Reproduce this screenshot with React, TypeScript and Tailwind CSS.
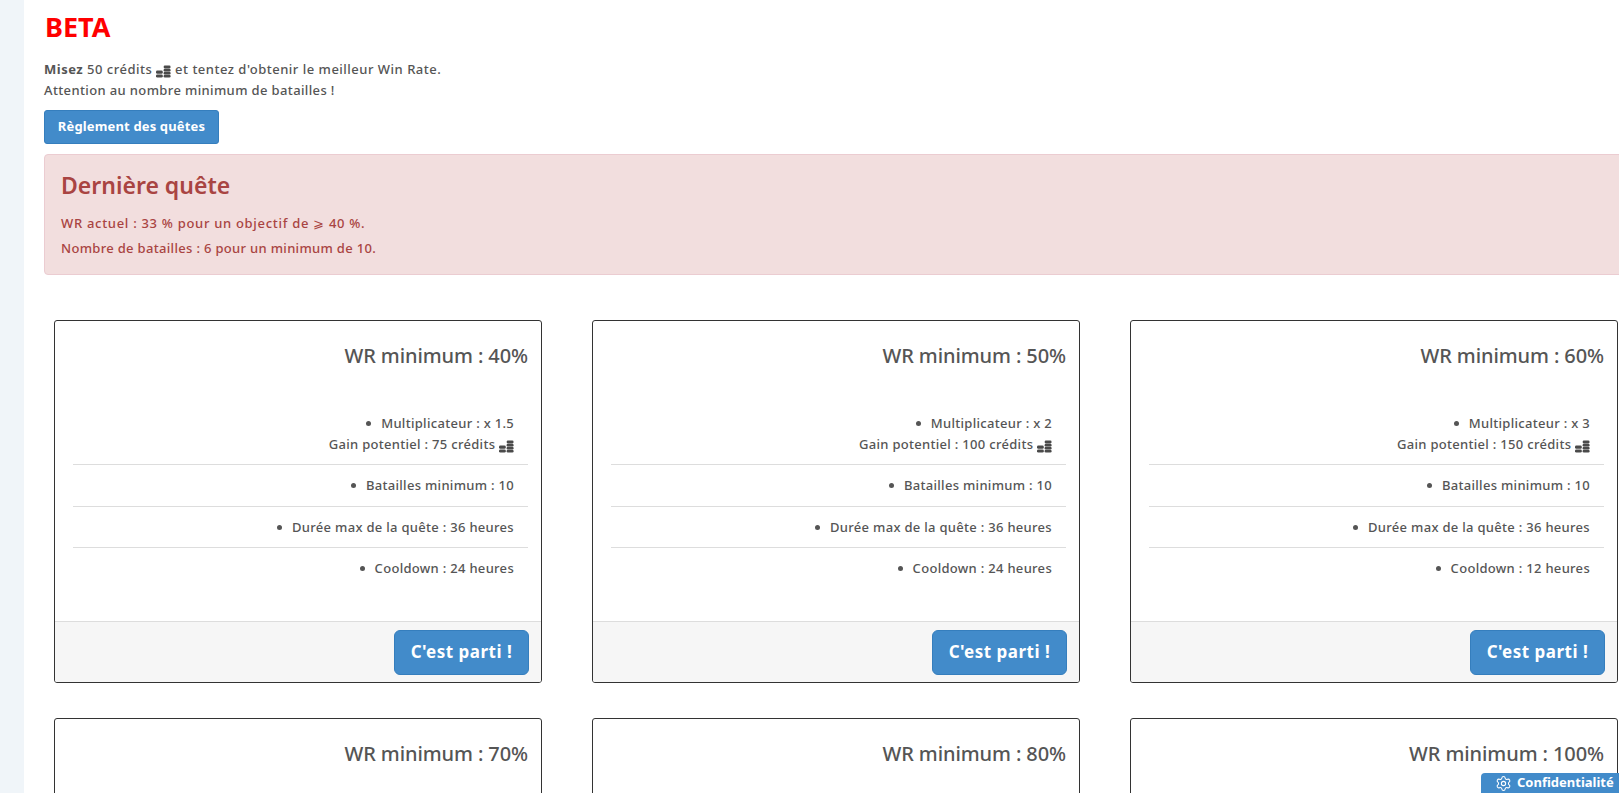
import React from 'react';
import { Settings } from 'lucide-react';

// small stack of coins shown next to the credits
const Coins = () => (
    <svg viewBox="0 0 15 13" className="inline-block w-[15px] h-[13px] align-[-4px]" aria-hidden="true">
        <g fill="#4a4a4a">
            <rect x="0" y="5.6" width="6.8" height="3.2" rx="1.4" />
            <rect x="0" y="9.4" width="6.8" height="3.2" rx="1.4" />
            <rect x="7.6" y="0.6" width="7" height="2.8" rx="1.3" />
            <rect x="7.6" y="3.8" width="7" height="2.8" rx="1.3" />
            <rect x="7.6" y="6.8" width="7" height="2.8" rx="1.3" />
            <rect x="7.6" y="9.8" width="7" height="2.8" rx="1.3" />
        </g>
    </svg>
);

const Bullet = () => <span className="inline-block w-[5px] h-[5px] rounded-full bg-[#555] mr-[10px] align-[2px]" />;

interface Quest {
    wr: number;
    multiplier: string;
    gain: number;
    cooldown: number;
}

const quests: Quest[] = [
    { wr: 40, multiplier: '1.5', gain: 75, cooldown: 24 },
    { wr: 50, multiplier: '2', gain: 100, cooldown: 24 },
    { wr: 60, multiplier: '3', gain: 150, cooldown: 12 },
    { wr: 70, multiplier: '4', gain: 200, cooldown: 12 },
    { wr: 80, multiplier: '5', gain: 250, cooldown: 12 },
    { wr: 100, multiplier: '10', gain: 500, cooldown: 12 },
];

const QuestCard: React.FC<{ quest: Quest }> = ({ quest }) => (
    <div className="h-[363px] flex flex-col border border-[#333] rounded-[3px] bg-white overflow-hidden">
        <div className="flex-1 pt-[23px] pl-[18px] pr-[13px]">
            <h3 className="text-[20px] leading-[24px] font-medium text-right tracking-[-0.1px]">WR minimum : {quest.wr}%</h3>
            <ul className="mt-[45px] text-right text-[13px] leading-[20px] tracking-[0.3px] font-medium">
                <li className="pr-[14px] pb-[9px] leading-[21px] border-b border-[#ddd]">
                    <Bullet />Multiplicateur : x {quest.multiplier}
                    <br />
                    Gain potentiel : {quest.gain} crédits <Coins />
                </li>
                <li className="pr-[14px] pt-[10px] pb-[11px] border-b border-[#ddd]"><Bullet />Batailles minimum : 10</li>
                <li className="pr-[14px] py-[10px] border-b border-[#ddd]"><Bullet />Durée max de la quête : 36 heures</li>
                <li className="pr-[14px] py-[10px]"><Bullet />Cooldown : {quest.cooldown} heures</li>
            </ul>
        </div>
        <div className="h-[61px] flex items-start justify-end bg-[#f6f6f6] border-t border-[#ddd] pt-[8px] pr-[12px]">
            <button className="w-[135px] h-[45px] pb-[2px] rounded-[6px] bg-[#428bca] border border-[#357ebd] text-white text-[17px] font-bold tracking-[0.5px]">
                C'est parti !
            </button>
        </div>
    </div>
);

export default function App() {
    return (
        <div className="h-[793px] overflow-hidden bg-[#f0f5f9] pl-[24px] text-[#555] font-['Noto_Sans',sans-serif]">
            <div className="h-full bg-white pl-[20px] pt-[8px] relative overflow-hidden">
                <h1 className="pl-[1px] text-[27px] leading-[38px] font-bold text-[#f00]">BETA</h1>
                <p className="mt-[13px] text-[13px] leading-[21px] font-medium">
                    <span className="tracking-[0.5px]"><b>Misez</b> 50 crédits <Coins /> et tentez d'obtenir le meilleur Win Rate.</span>
                    <br />
                    <span className="tracking-[0.37px]">Attention au nombre minimum de batailles !</span>
                </p>
                <button className="block mt-[9px] w-[175px] h-[34px] rounded-[3px] bg-[#428bca] border border-[#357ebd] text-white text-[13px] font-bold tracking-[0.15px]">
                    Règlement des quêtes
                </button>
                <div className="mt-[10px] w-[1600px] h-[121px] rounded-[4px] bg-[#f2dede] border border-[#ebccd1] text-[#a94442] pl-[16px] pt-[15px]">
                    <h2 className="text-[23px] leading-[30px] font-semibold">Dernière quête</h2>
                    <p className="mt-[11px] text-[13px] leading-[25px] font-medium">
                        <span className="tracking-[0.7px]">WR actuel : 33 % pour un objectif de ⩾ 40 %.</span>
                        <br />
                        <span className="tracking-[0.32px]">Nombre de batailles : 6 pour un minimum de 10.</span>
                    </p>
                </div>
                <div className="mt-[45px] ml-[10px] grid grid-cols-[488px_488px_488px] gap-x-[50px] gap-y-[35px]">
                    {quests.map(q => <QuestCard key={q.wr} quest={q} />)}
                </div>
                <button className="absolute right-0 bottom-0 w-[138px] h-[20px] flex items-center gap-[5px] pl-[14px] rounded-tl-[4px] bg-[#428bca] text-white text-[13px] font-bold">
                    <Settings size={17} strokeWidth={1.5} className="shrink-0" />
                    Confidentialité
                </button>
            </div>
        </div>
    );
}
